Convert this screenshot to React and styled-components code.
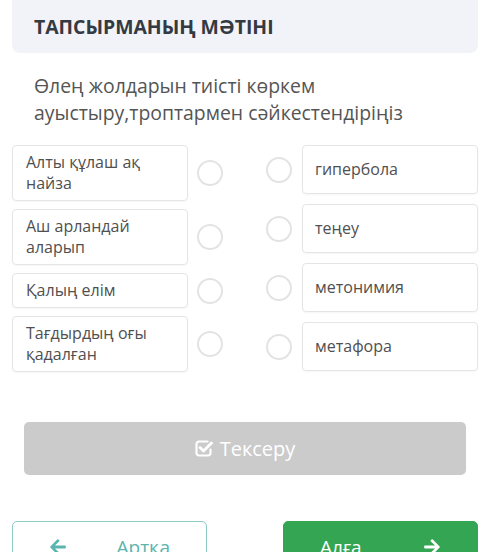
import React from "react";
import styled, { createGlobalStyle } from "styled-components";
import { FaArrowLeft, FaArrowRight } from "react-icons/fa";

const GlobalStyle = createGlobalStyle`
  body {
    margin: 0;
    background: #fff;
    font-family: "Open Sans", "Noto Sans", sans-serif;
  }
`;

const leftItems = [
  "Алты құлаш ақ найза",
  "Аш арландай аларып",
  "Қалың елім",
  "Тағдырдың оғы қадалған",
];

const rightItems = ["гипербола", "теңеу", "метонимия", "метафора"];

// check mark spilling out of a square, like fa-check-square-o
const CheckIcon = () => (
  <svg width="18" height="17" viewBox="0 0 18 17" fill="none">
    <path
      d="M12.5 1.5H4a2.5 2.5 0 0 0-2.5 2.5v9A2.5 2.5 0 0 0 4 15.5h9a2.5 2.5 0 0 0 2.5-2.5V9.5"
      stroke="#fff"
      strokeWidth="2.2"
      strokeLinecap="round"
    />
    <path
      d="M5 7.5l3.5 3.5L16.5 3"
      stroke="#fff"
      strokeWidth="2.8"
      strokeLinecap="round"
      strokeLinejoin="round"
    />
  </svg>
);

const App = () => {
  return (
    <Page>
      <GlobalStyle />
      <Header>
        <Title>ТАПСЫРМАНЫҢ МӘТІНІ</Title>
      </Header>
      <Question>
        Өлең жолдарын тиісті көркем ауыстыру,троптармен сәйкестендіріңіз
      </Question>
      <Match>
        <Column gap={8}>
          {leftItems.map((t) => (
            <Row key={t}>
              <Card>{t}</Card>
              <Radio />
            </Row>
          ))}
        </Column>
        <Column gap={10}>
          {rightItems.map((t) => (
            <Row key={t} right>
              <Radio />
              <Card fixed>{t}</Card>
            </Row>
          ))}
        </Column>
      </Match>
      <CheckButton>
        <CheckIcon />
        Тексеру
      </CheckButton>
      <NavRow>
        <NavButton>
          <FaArrowLeft size={18} />
          <span>Артқа</span>
        </NavButton>
        <NavButton primary>
          <span>Алға</span>
          <FaArrowRight size={18} />
        </NavButton>
      </NavRow>
    </Page>
  );
};

const Page = styled.div`
  width: 500px;
  height: 552px;
  overflow: hidden;
  box-sizing: border-box;
  padding: 0 22px 0 12px;
`;

const Header = styled.div`
  height: 53px;
  background: #f2f3f8;
  border-radius: 0 0 8px 8px;
  display: flex;
  align-items: center;
  padding-left: 22px;
`;

const Title = styled.h1`
  margin: 0;
  font-size: 19.4px;
  font-weight: 700;
  color: #343a42;
`;

const Question = styled.p`
  margin: 19px 0 0;
  padding: 0 10px 0 22px;
  font-size: 19.4px;
  line-height: 27px;
  color: #555;
`;

const Match = styled.div`
  margin-top: 19px;
  display: flex;
  justify-content: space-between;
`;

const Column = styled.div`
  display: flex;
  flex-direction: column;
  gap: ${(p) => p.gap}px;
`;

const Row = styled.div`
  display: flex;
  align-items: center;
  gap: ${(p) => (p.right ? 10 : 9)}px;
`;

const Card = styled.div`
  box-sizing: border-box;
  width: 176px;
  min-height: ${(p) => (p.fixed ? "49px" : "auto")};
  display: flex;
  align-items: center;
  padding: ${(p) => (p.fixed ? "0 12px" : "6px 13px")};
  border: 1px solid #e5e5e5;
  border-radius: 4px;
  box-shadow: 0 1px 2px rgba(0, 0, 0, 0.04);
  font-size: 16px;
  line-height: 21px;
  color: #505050;
`;

const Radio = styled.span`
  box-sizing: border-box;
  width: 26px;
  height: 26px;
  border-radius: 50%;
  border: 2px solid #e3e3e3;
  flex-shrink: 0;
`;

const CheckButton = styled.div`
  margin: 50px 12px 0;
  height: 53px;
  border-radius: 5px;
  background: #cbcbcb;
  color: #fff;
  display: flex;
  align-items: center;
  justify-content: center;
  gap: 7px;
  font-size: 20px;
`;

const NavRow = styled.div`
  margin-top: 46px;
  display: flex;
  justify-content: space-between;
`;

const NavButton = styled.div`
  box-sizing: border-box;
  width: 195px;
  height: 52px;
  border-radius: 5px;
  padding: 0 36px;
  display: flex;
  align-items: center;
  justify-content: space-between;
  font-size: 19px;
  background: ${(p) => (p.primary ? "#34a552" : "#fff")};
  color: ${(p) => (p.primary ? "#fff" : "#5bb5ae")};
  border: 1px solid ${(p) => (p.primary ? "#34a552" : "#8fcac5")};
`;

export default App;
